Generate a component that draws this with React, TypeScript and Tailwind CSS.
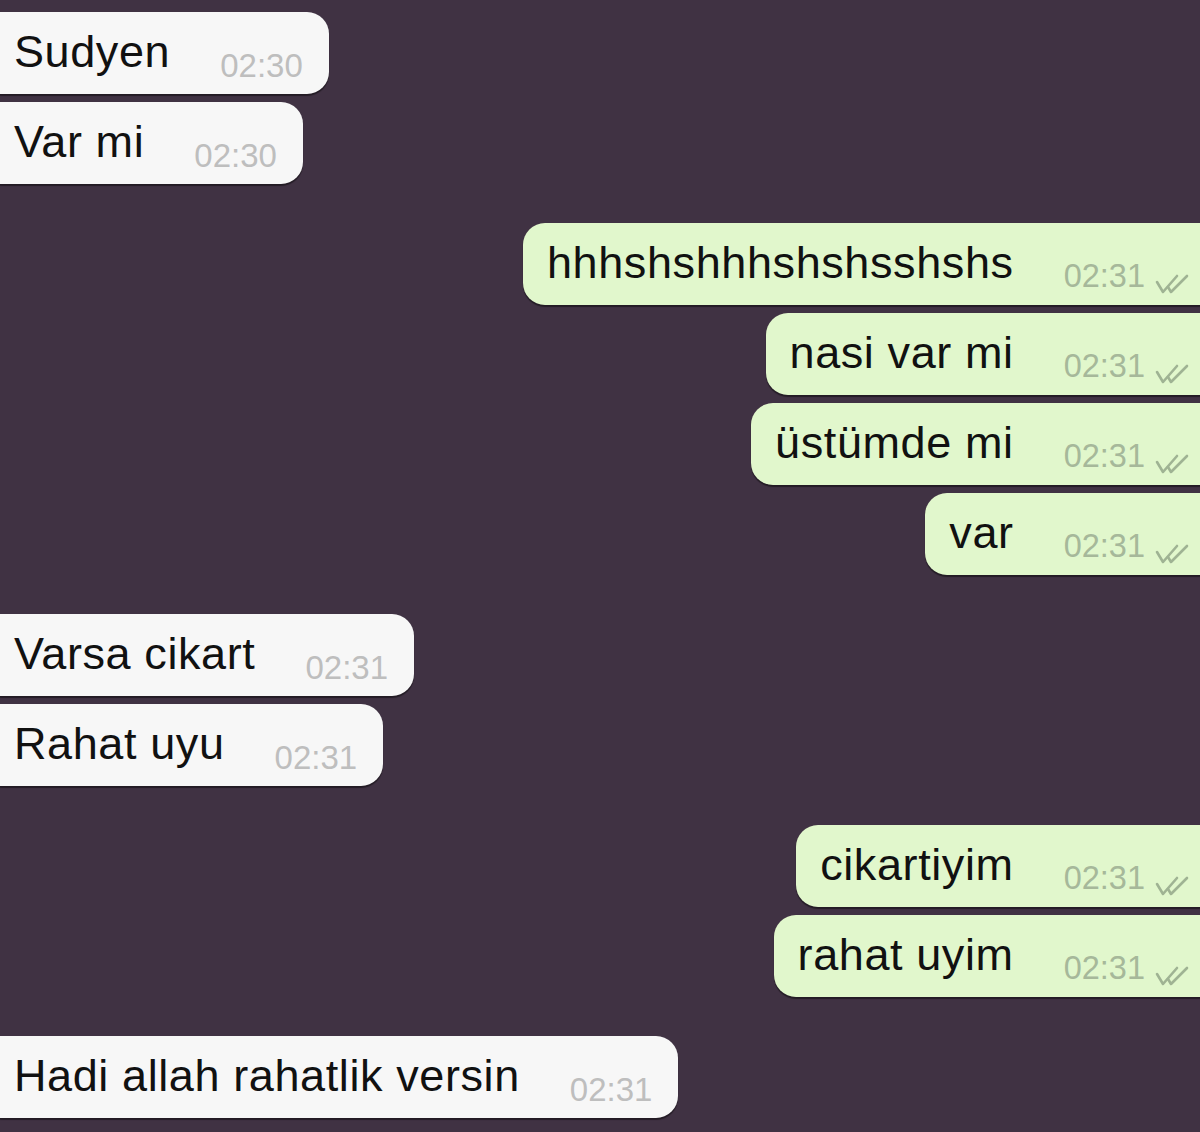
import React from "react";

type Msg = { text: string; time: string; out?: boolean };

const groups: Msg[][] = [
  [
    { text: "Sudyen", time: "02:30" },
    { text: "Var mi", time: "02:30" },
  ],
  [
    { text: "hhhshshhhshshsshshs", time: "02:31", out: true },
    { text: "nasi var mi", time: "02:31", out: true },
    { text: "üstümde mi", time: "02:31", out: true },
    { text: "var", time: "02:31", out: true },
  ],
  [
    { text: "Varsa cikart", time: "02:31" },
    { text: "Rahat uyu", time: "02:31" },
  ],
  [
    { text: "cikartiyim", time: "02:31", out: true },
    { text: "rahat uyim", time: "02:31", out: true },
  ],
  [{ text: "Hadi allah rahatlik versin", time: "02:31" }],
];

function DoubleCheck() {
  return (
    <svg width="36" height="20" viewBox="0 0 36 20" fill="none" className="mb-[-2px] ml-[9px] shrink-0">
      <path d="M3 8 L9 18 L23 2" stroke="#9fb393" strokeWidth="2.6" strokeLinecap="round" strokeLinejoin="round" />
      <path d="M14 13 L17 18 L33 2" stroke="#9fb393" strokeWidth="2.6" strokeLinecap="round" strokeLinejoin="round" />
    </svg>
  );
}

function Bubble({ msg }: { msg: Msg }) {
  if (msg.out) {
    return (
      <div className="flex justify-end">
        <div className="-mr-[30px] flex h-[82px] items-start rounded-[22px] bg-[#e1f7cc] pl-[24px] pr-[40px] shadow-[0_2px_1px_rgba(0,0,0,0.45)]">
          <span className="mt-[17px] text-[45px] leading-[45px] tracking-[0.6px] text-[#111]">{msg.text}</span>
          <span className="ml-[50px] mt-[37px] flex items-end text-[32.5px] leading-[32px] text-[#a6b89a]">
            {msg.time}
            <DoubleCheck />
          </span>
        </div>
      </div>
    );
  }
  return (
    <div className="flex justify-start">
      <div className="-ml-[20px] flex h-[82px] items-start rounded-[22px] bg-[#f7f7f7] pl-[34px] pr-[26px] shadow-[0_2px_1px_rgba(0,0,0,0.45)]">
        <span className="mt-[17px] text-[45px] leading-[45px] tracking-[0.6px] text-[#111]">{msg.text}</span>
        <span className="ml-[50px] mt-[37px] text-[33px] leading-[33px] text-[#bebebe]">{msg.time}</span>
      </div>
    </div>
  );
}

export default function App() {
  return (
    <div
      className="flex h-[1132px] w-[1200px] flex-col gap-[39px] overflow-hidden bg-[#403243] pt-[12px]"
      style={{ fontFamily: '"Liberation Sans", Arial, sans-serif' }}
    >
      {groups.map((g, i) => (
        <div key={i} className="flex flex-col gap-[8px]">
          {g.map((m, j) => (
            <Bubble key={j} msg={m} />
          ))}
        </div>
      ))}
    </div>
  );
}
